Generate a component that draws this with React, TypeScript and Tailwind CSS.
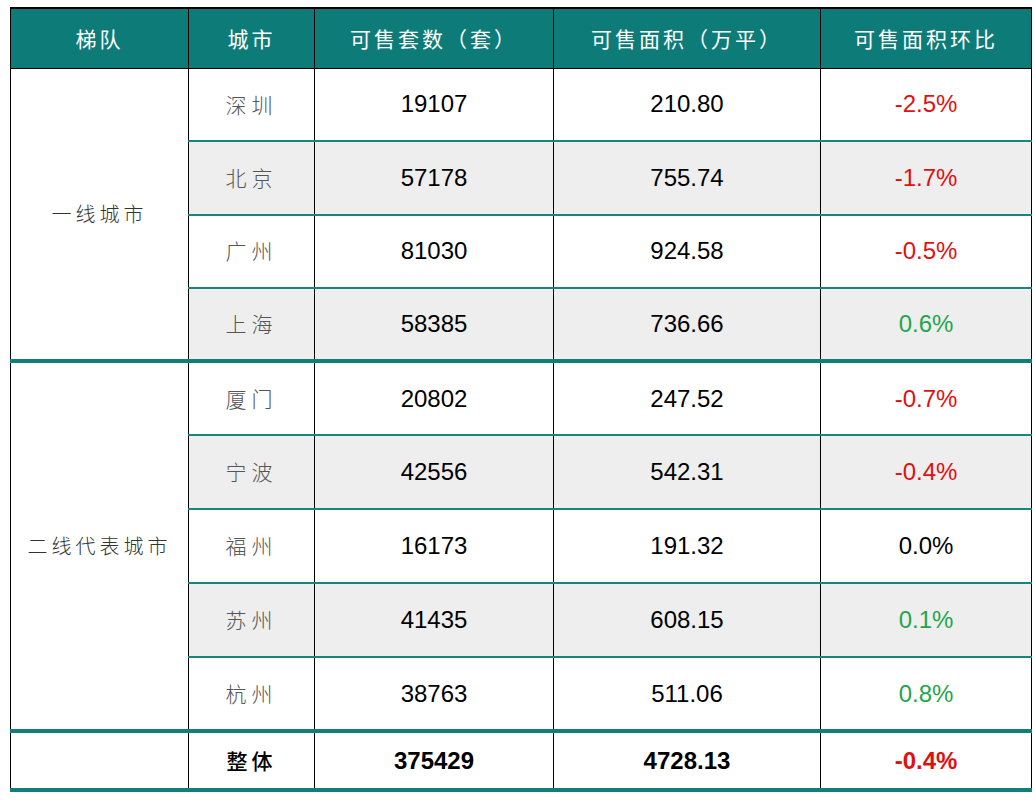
import React from 'react';

type Row = {
  city: string;
  units: string;
  area: string;
  change: string;
};

const tierOne: Row[] = [
  { city: '深圳', units: '19107', area: '210.80', change: '-2.5%' },
  { city: '北京', units: '57178', area: '755.74', change: '-1.7%' },
  { city: '广州', units: '81030', area: '924.58', change: '-0.5%' },
  { city: '上海', units: '58385', area: '736.66', change: '0.6%' },
];

const tierTwo: Row[] = [
  { city: '厦门', units: '20802', area: '247.52', change: '-0.7%' },
  { city: '宁波', units: '42556', area: '542.31', change: '-0.4%' },
  { city: '福州', units: '16173', area: '191.32', change: '0.0%' },
  { city: '苏州', units: '41435', area: '608.15', change: '0.1%' },
  { city: '杭州', units: '38763', area: '511.06', change: '0.8%' },
];

const cjk = "font-['Noto_Sans_CJK_SC',sans-serif]";
const num = "font-['Liberation_Sans',Arial,sans-serif]";

function changeColor(v: string) {
  if (v.startsWith('-')) return 'text-[#e01010]';
  if (v === '0.0%') return 'text-black';
  return 'text-[#1fa64a]';
}

function DataRow({ row, index, groupLabel, groupSize, last, tall }: { row: Row; index: number; groupLabel: string; groupSize: number; last: boolean; tall: boolean }) {
  const bg = index % 2 === 1 ? 'bg-[#eeeeee]' : 'bg-white';
  const bottom = last ? 'border-b-[4px] border-b-[#127e7a]' : 'border-b-2 border-b-[#1a837d]';
  return (
    <tr className={tall ? 'h-[74px]' : 'h-[73.25px]'}>
      {index === 0 && (
        <td
          rowSpan={groupSize}
          className={`${cjk} bg-white border-l border-r border-black border-b-[4px] border-b-[#127e7a] text-center text-[20px] tracking-[4px] text-[#333] font-light`}
        >
          {groupLabel}
        </td>
      )}
      <td className={`${cjk} ${bg} ${bottom} border-r border-black text-center text-[21px] tracking-[5px] text-[#555] font-light`}>
        {row.city}
      </td>
      <td className={`${num} ${bg} ${bottom} border-r border-black text-center text-[24px] text-black`}>{row.units}</td>
      <td className={`${num} ${bg} ${bottom} border-r border-black text-center text-[24px] text-black`}>{row.area}</td>
      <td className={`${num} ${bg} ${bottom} border-r border-black text-center text-[24px] ${changeColor(row.change)}`}>
        {row.change}
      </td>
    </tr>
  );
}

export default function App() {
  const headers = ['梯队', '城市', '可售套数（套）', '可售面积（万平）', '可售面积环比'];
  return (
    <div className="bg-white w-[1035px] h-[800px] pt-[7px] pl-[10px]">
      <table className="table-fixed border-collapse w-[1021px]">
        <colgroup>
          <col className="w-[178px]" />
          <col className="w-[126px]" />
          <col className="w-[239px]" />
          <col className="w-[267px]" />
          <col className="w-[211px]" />
        </colgroup>
        <thead>
          <tr className="h-[60px]">
            {headers.map((h) => (
              <th
                key={h}
                className={`${cjk} bg-[#0d7c79] border-t-2 border-b border-l border-r border-black text-white text-[21px] font-normal tracking-[3px] text-center`}
              >
                {h}
              </th>
            ))}
          </tr>
        </thead>
        <tbody>
          {tierOne.map((r, i) => (
            <DataRow key={r.city} row={r} index={i} groupLabel="一线城市" groupSize={tierOne.length} last={i === tierOne.length - 1} tall={false} />
          ))}
          {tierTwo.map((r, i) => (
            <DataRow key={r.city} row={r} index={i} groupLabel="二线代表城市" groupSize={tierTwo.length} last={i === tierTwo.length - 1} tall={true} />
          ))}
          <tr className="h-[59px]">
            <td className="bg-white border-l border-r border-black border-b-[4px] border-b-[#127e7a]"></td>
            <td className={`${cjk} bg-white border-r border-black border-b-[4px] border-b-[#127e7a] text-center text-[21px] tracking-[4px] text-black font-medium`}>
              整体
            </td>
            <td className={`${num} bg-white border-r border-black border-b-[4px] border-b-[#127e7a] text-center text-[24px] font-bold text-black`}>375429</td>
            <td className={`${num} bg-white border-r border-black border-b-[4px] border-b-[#127e7a] text-center text-[24px] font-bold text-black`}>4728.13</td>
            <td className={`${num} bg-white border-r border-black border-b-[4px] border-b-[#127e7a] text-center text-[24px] font-bold text-[#e01010]`}>-0.4%</td>
          </tr>
        </tbody>
      </table>
    </div>
  );
}
